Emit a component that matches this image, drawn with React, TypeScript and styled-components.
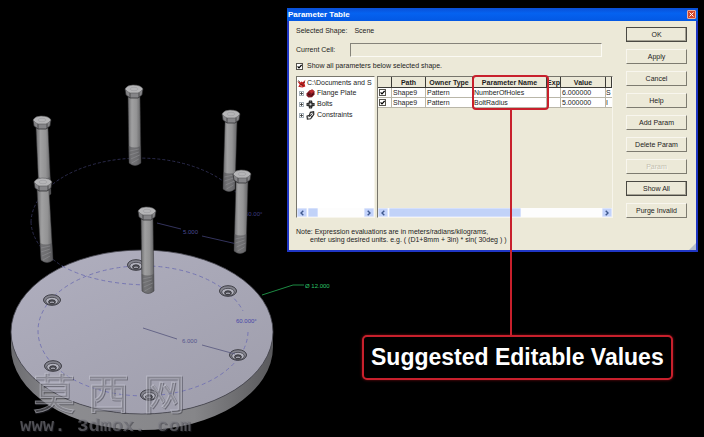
import React from "react";
import styled, { createGlobalStyle } from "styled-components";

const GlobalStyle = createGlobalStyle`
  *, *::before, *::after { box-sizing: border-box; }
  body {
    margin: 0;
    background: #000;
    font: 7px/10px "Liberation Sans", Arial, sans-serif;
    color: #1c1c1c;
  }
  button, input, h1, p, table { margin: 0; font: inherit; color: inherit; }
`;

const face = "#ece9d8";
const red = "#c8202c";

const Page = styled.main`
  position: relative;
  display: grid;
  grid-template-columns: 287px minmax(0, 1fr);
  min-height: 100vh;
  padding: 8px 6px 0 0;
  background: #000;
  overflow: hidden;
`;

const Scene = styled.svg`
  position: absolute;
  left: 0;
  top: 0;
`;

const Column = styled.div`
  grid-column: 2;
  position: relative;
`;

const Dialog = styled.section`
  border: 2px solid #1f36c4;
  border-top: 0;
  background: ${face};
`;

const TitleBar = styled.header`
  display: flex;
  align-items: center;
  justify-content: space-between;
  height: 13px;
  margin: 0 -2px;
  padding: 0 2px 0 1px;
  background: linear-gradient(#0a4fd6, #0562f0 40%, #0358e4);
`;

const Title = styled.h1`
  font-size: 8px;
  font-weight: bold;
  color: #fff;
`;

const CloseButton = styled.button`
  display: grid;
  place-items: center;
  width: 9px;
  height: 9px;
  padding: 0;
  border: 1px solid #eab0a0;
  border-radius: 1px;
  background: #d2472a;
`;

const Body = styled.div`
  position: relative;
  display: grid;
  grid-template-columns: minmax(0, 1fr) 61px;
  column-gap: 13px;
  padding: 5px 9px 6px 7px;
`;

const Shape = styled.p`
  display: flex;
  gap: 7px;
`;

const Field = styled.div`
  display: flex;
  align-items: center;
  height: 14px;
  margin-top: 7px;
`;

const FieldLabel = styled.label`
  width: 54px;
`;

const CellInput = styled.input`
  flex: 1;
  min-width: 0;
  height: 14px;
  margin-right: 11px;
  padding: 0 2px;
  border: 1px solid #fbfaf4;
  border-top-color: #85837a;
  border-left-color: #85837a;
  background: ${face};
`;

const CheckRow = styled.label`
  display: flex;
  align-items: center;
  gap: 4px;
  margin-top: 4px;
`;

const Tick = styled.input`
  appearance: none;
  display: block;
  width: 7px;
  height: 7px;
  border: 1px solid #55534c;
  background: #fff;
  &:checked {
    background: #fff url("data:image/svg+xml,%3Csvg xmlns='http://www.w3.org/2000/svg' viewBox='0 0 5 5'%3E%3Cpath d='M.6 2.3L2 3.9L4.6 1' fill='none' stroke='black' stroke-width='1.2'/%3E%3C/svg%3E") center / 5px 5px no-repeat;
  }
`;

const Panels = styled.div`
  display: grid;
  grid-template-columns: 79px minmax(0, 1fr);
  gap: 2px;
  height: 142px;
  margin-top: 5px;
`;

const Panel = styled.div<{ $white?: boolean }>`
  position: relative;
  display: flex;
  flex-direction: column;
  min-width: 0;
  border: 1px solid #f7f5ec;
  border-top-color: #77756c;
  border-left-color: #77756c;
  background: ${(p) => (p.$white ? "#fff" : face)};
`;

const PanelContent = styled.div`
  flex: 1;
  overflow: hidden;
`;

const Tree = styled.ul`
  margin: 0;
  padding: 1px 0 0;
  list-style: none;
`;

const TreeItem = styled.li<{ $child?: boolean }>`
  display: flex;
  align-items: center;
  gap: ${(p) => (p.$child ? "2px" : "1px")};
  height: 10px;
  margin-bottom: ${(p) => (p.$child ? "1px" : "0")};
  padding-left: ${(p) => (p.$child ? "2px" : "0")};
  white-space: nowrap;
  svg { flex: none; }
`;

const Expander = styled.button`
  display: grid;
  place-items: center;
  width: 5px;
  height: 5px;
  padding: 0;
  border: 1px solid #a9b4bd;
  background: #fff;
`;

const Bar = styled.div`
  display: flex;
  height: 9px;
  background: #fdfdfd;
`;

const BarButton = styled.button`
  display: grid;
  place-items: center;
  flex: none;
  width: 10px;
  padding: 0;
  border: 1px solid #dbe4fb;
  border-radius: 1px;
  background: #c3d3fb;
`;

const Thumb = styled.div<{ $width: string }>`
  width: ${(p) => p.$width};
  margin: 0 1px;
  border: 1px solid #d5e0fc;
  border-radius: 1px;
  background: #c1d2f8;
`;

const Spacer = styled.div`
  flex: 1;
`;

const Table = styled.table`
  width: 100%;
  table-layout: fixed;
  border-collapse: separate;
  border-spacing: 0;
  text-align: left;
`;

const Col = styled.col<{ $width?: string }>`
  width: ${(p) => p.$width ?? "auto"};
`;

const Th = styled.th`
  height: 11px;
  padding: 0;
  border-right: 1px solid #3b3a36;
  border-bottom: 1px solid #3b3a36;
  background: ${face};
  line-height: 9px;
  text-align: center;
  white-space: nowrap;
`;

const Td = styled.td`
  height: 10px;
  padding: 0 0 0 1px;
  border-right: 1px solid #b9b6a8;
  border-bottom: 1px solid #b9b6a8;
  background: #fff;
  line-height: 9px;
  white-space: nowrap;
  &:last-child {
    padding: 0;
    border-right: 0;
  }
`;

const Buttons = styled.div`
  display: flex;
  flex-direction: column;
  justify-content: space-between;
  padding-top: 1px;
`;

const PushButton = styled.button<{ $strong?: boolean }>`
  height: 15px;
  padding: 0;
  border: 1px solid #f8f6ee;
  border-right-color: #7d7b70;
  border-bottom-color: #7d7b70;
  background: ${face};
  ${(p) => p.$strong && "border-color: #4a4943; box-shadow: inset -1px -1px #a5a294;"}
  &:disabled {
    color: #c4c1b2;
    text-shadow: 1px 1px #fbfaf4;
  }
`;

const Note = styled.p`
  margin-top: 10px;
  line-height: 8px;
`;

const NoteLine = styled.span<{ $indent?: boolean }>`
  display: block;
  padding-left: ${(p) => (p.$indent ? "14px" : "0")};
`;

const Grip = styled.svg`
  position: absolute;
  right: 0;
  bottom: 0;
`;

const Highlight = styled.div`
  position: absolute;
  left: 94px;
  top: -2px;
  width: 77px;
  height: 35px;
  border: 2px solid ${red};
  border-radius: 4px;
  pointer-events: none;
  z-index: 2;
  &::after {
    content: "";
    position: absolute;
    left: 36px;
    top: 100%;
    width: 2px;
    height: 228px;
    background: ${red};
  }
`;

const Callout = styled.p`
  width: fit-content;
  margin: 83px 0 0 75px !important;
  padding: 8px 7px;
  border: 2px solid ${red};
  border-radius: 5px;
  background: #000;
  box-shadow: 0 0 3px #7a0c12;
  color: #fff;
  font-size: 23px;
  font-weight: bold;
  line-height: 25px;
  white-space: nowrap;
`;

const Dim = styled.text<{ $color: string }>`
  font: 6px "Liberation Sans", Arial, sans-serif;
  fill: ${(p) => p.$color};
`;

const Watermark = styled.g`
  fill: rgba(165, 165, 176, 0.35);
  stroke: rgba(205, 205, 218, 0.5);
  stroke-width: 1px;
  filter: drop-shadow(1px 1px 0 rgba(40, 40, 48, 0.7));
`;

const Hanzi = styled.text`
  font: 42px "Noto Sans CJK SC", sans-serif;
`;

const Address = styled.text`
  font: bold 19px "Liberation Mono", monospace;
  stroke-width: 0;
  fill: rgba(125, 125, 132, 0.6);
  white-space: pre;
`;

const Cross = () => (
  <svg width="5" height="5" viewBox="0 0 5 5" aria-hidden="true">
    <path d="M.5.5l4 4m0-4l-4 4" stroke="#fff" strokeWidth="1" />
  </svg>
);

const Arrow = ({ right }: { right?: boolean }) => (
  <svg width="4" height="6" viewBox="0 0 4 6" aria-hidden="true">
    <path d={right ? "M.7.7L3 3L.7 5.3" : "M3.3.7L1 3l2.3 2.3"} fill="none" stroke="#40598f" strokeWidth="1.4" />
  </svg>
);

const Plus = () => (
  <svg width="3" height="3" viewBox="0 0 3 3" aria-hidden="true">
    <path d="M0 1.5h3M1.5 0v3" stroke="#333" strokeWidth=".8" />
  </svg>
);

const SceneIcon = () => (
  <svg width="9" height="9" viewBox="0 0 9 9" aria-hidden="true">
    <path d="M.3 2.2L3.2 3.6L4.4 2.4L5.8 3.2L8.5.8L7.4 4L8.3 7.6L5.4 8.4L1.2 7.7L2.7 5.6Z" fill="#c41e1e" />
    <path d="M1 1.6L3 3M3.4 5.2l3 1.4M6.2 4l1.6-.6" stroke="#40201c" strokeWidth=".8" />
    <path d="M3.2 6.6l2 .7" stroke="#f5c6bd" strokeWidth=".7" />
  </svg>
);

const PlateIcon = () => (
  <svg width="9" height="9" viewBox="0 0 9 9" aria-hidden="true">
    <path d="M3 1.8L6.2.5L8.5 2.2V5.4L6 8.2L2.5 8.6L.5 6.8V4.4Z" fill="#7c1620" />
    <path d="M3 1.8L6.2.5L8.5 2.2L5.2 4.6Z" fill="#bd2b30" />
    <path d="M2 4.8l2.2 1.4M5.6 6.6l2-2" stroke="#26080b" strokeWidth=".9" />
  </svg>
);

const BoltsIcon = () => (
  <svg width="9" height="9" viewBox="0 0 9 9" aria-hidden="true">
    <path d="M3 .5h3l.6 2.4 2 .2v2.8l-2 .4L6 8.5H3L2.6 6.3.5 5.9V3.1l2-.4Z" fill="#292929" />
    <circle cx="4.5" cy="4.4" r="1.1" fill="#ddd" />
    <path d="M1.5 4.4h1M6.6 4.4h1M4.5 1.4v.8M4.5 6.8v.8" stroke="#aaa" strokeWidth=".7" />
  </svg>
);

const ConstraintsIcon = () => (
  <svg width="9" height="9" viewBox="0 0 9 9" aria-hidden="true">
    <path d="M3.4 4.2L4.4 1.4L7.6.8L7.8 3.4L6.2 5.6L4.6 7.8L1.4 8.2L1 5.2Z" fill="none" stroke="#2b2b2b" strokeWidth="1.2" />
    <path d="M2.6 6.2L6.4 2.4M3.4 4.2l2.8 1.4" stroke="#2b2b2b" strokeWidth="1" />
  </svg>
);

const HexBolt = ({ x, y, length, lean }: { x: number; y: number; length: number; lean: number }) => {
  const end = y + length;
  const bx = x + lean;
  const ty = end - 19;
  const tx = x + lean * 0.75;
  return (
    <g>
      <path d={`M${x - 6} ${y + 6}L${bx - 6} ${end - 2}Q${bx} ${end + 3} ${bx + 6} ${end - 2}L${x + 6} ${y + 6}Z`} fill="url(#shank)" stroke="#303032" strokeWidth=".5" />
      <path d={`M${tx - 6} ${ty}Q${tx} ${ty + 3} ${tx + 6} ${ty}L${bx + 6} ${end - 2}Q${bx} ${end + 3} ${bx - 6} ${end - 2}Z`} fill="#4f4f52" fillOpacity=".55" />
      <path d={`M${tx - 5} ${ty + 5}l9-2M${tx - 5} ${ty + 9}l9-3M${tx - 4} ${ty + 13}l9-4M${tx - 3} ${ty + 17}l7-4`} stroke="#919194" strokeWidth=".6" />
      <path d={`M${x - 9} ${y - 2}L${x - 8} ${y + 4}L${x - 4} ${y + 7}H${x + 4}L${x + 8} ${y + 4}L${x + 9} ${y - 2}Z`} fill="#858588" stroke="#262628" strokeWidth=".7" />
      <path d={`M${x - 4} ${y + 1}V${y + 7}M${x + 5} ${y + 1}V${y + 6}`} stroke="#3a3a3c" strokeWidth=".8" />
      <path d={`M${x - 9} ${y - 2}Q${x - 7} ${y - 6} ${x - 1} ${y - 6}Q${x + 7} ${y - 6} ${x + 9} ${y - 2}Q${x + 7} ${y + 1} ${x + 4} ${y + 2}H${x - 4}Q${x - 7} ${y + 1} ${x - 9} ${y - 2}Z`} fill="#b5b5b7" stroke="#59595b" strokeWidth=".6" />
      <ellipse cx={x} cy={y - 2} rx="4" ry="1.7" fill="none" stroke="#9b9b9e" strokeWidth=".6" />
    </g>
  );
};

const Hole = ({ x, y }: { x: number; y: number }) => (
  <g fill="none">
    <ellipse cx={x} cy={y} rx="8.5" ry="5.3" fill="#85858f" stroke="#303037" strokeWidth=".9" />
    <ellipse cx={x} cy={y + 1} rx="6.3" ry="3.7" fill="#b2b2bd" stroke="#3c3c44" strokeWidth=".8" />
    <ellipse cx={x} cy={y + 1.8} rx="3.4" ry="2" fill="#56565e" stroke="#26262b" strokeWidth=".8" />
    <path d={`M${x - 2} ${y + 2.8}q2-1.4 4 0`} stroke="#b9b9c3" strokeWidth=".9" />
  </g>
);

const bolts = [
  { x: 134, y: 91, length: 74, lean: 1 },
  { x: 42, y: 122, length: 74, lean: 3 },
  { x: 231, y: 116, length: 75, lean: -2 },
  { x: 43, y: 184, length: 78, lean: 4 },
  { x: 242, y: 176, length: 77, lean: -2 },
  { x: 147, y: 213, length: 80, lean: 1 },
];
const holes = [[136, 265], [52, 300], [53, 366], [149, 395], [238, 355], [228, 291]];

const ModelView = () => (
  <Scene width="340" height="437" viewBox="0 0 340 437" role="img" aria-label="Flange plate with six bolts">
    <defs>
      <linearGradient id="shank">
        <stop offset="0" stopColor="#6c6c6e" />
        <stop offset=".3" stopColor="#a0a0a1" />
        <stop offset=".65" stopColor="#939394" />
        <stop offset="1" stopColor="#646466" />
      </linearGradient>
      <linearGradient id="rim">
        <stop offset="0" stopColor="#6c6c70" />
        <stop offset=".2" stopColor="#8c8c90" />
        <stop offset=".7" stopColor="#868689" />
        <stop offset="1" stopColor="#59595c" />
      </linearGradient>
      <linearGradient id="plate" x1="0" y1="0" x2=".7" y2="1">
        <stop offset="0" stopColor="#b0afbf" />
        <stop offset="1" stopColor="#a09fad" />
      </linearGradient>
    </defs>
    <path d="M31 222A109 65 0 0 1 246 208" fill="none" stroke="#2b2b4c" strokeWidth="1" strokeDasharray="3 2" />
    <path d="M31 222Q32 246 62 266" fill="none" stroke="#2b2b4c" strokeWidth="1" strokeDasharray="3 2" />
    <path d="M157 223L181 229M202 236L237 244" stroke="#33335c" strokeWidth="1" />
    <Dim x="183" y="234" $color="#4a4a92">5.000</Dim>
    <Dim x="245" y="216" $color="#3c3c80">60.00°</Dim>
    <path d="M11 332A131 82 0 0 0 273 332V347A131 83 0 0 1 11 347Z" fill="url(#rim)" />
    <ellipse cx="142" cy="332" rx="131" ry="82" fill="url(#plate)" stroke="#44444c" strokeWidth=".8" />
    <path d="M248 332A105 65 0 1 1 243 311" fill="none" stroke="#7777b2" strokeWidth="1" strokeDasharray="4 3" />
    <path d="M62 266Q95 284 147 285" fill="none" stroke="#7777b2" strokeWidth="1" strokeDasharray="4 3" />
    {holes.map(([x, y]) => <Hole key={x} x={x} y={y} />)}
    <path d="M143 328L177 339M202 345L235 354" stroke="#55557c" strokeWidth=".8" />
    <Dim x="182" y="343" $color="#54548c">6.000</Dim>
    <Dim x="236" y="323" $color="#4646a8">60.000°</Dim>
    {bolts.map((b) => <HexBolt key={`${b.x}-${b.y}`} {...b} />)}
    <path d="M262 295L293 285H304" fill="none" stroke="#1d8a43" strokeWidth="1" />
    <Dim x="305" y="288" $color="#2cc468">Ø 12.000</Dim>
    <Watermark>
      <Hanzi x="33" y="409">莫</Hanzi>
      <Hanzi x="87" y="409">西</Hanzi>
      <Hanzi x="143" y="409">网</Hanzi>
      <Address x="20" y="431">www. 3dmox. com</Address>
    </Watermark>
  </Scene>
);

const ScrollBar = ({ thumb }: { thumb: string }) => (
  <Bar>
    <BarButton aria-label="Scroll left"><Arrow /></BarButton>
    <Thumb $width={thumb} />
    <Spacer />
    <BarButton aria-label="Scroll right"><Arrow right /></BarButton>
  </Bar>
);

const nodes = [
  { name: "Flange Plate", Icon: PlateIcon },
  { name: "Bolts", Icon: BoltsIcon },
  { name: "Constraints", Icon: ConstraintsIcon },
];

const rows = [
  { path: "Shape9", owner: "Pattern", name: "NumberOfHoles", value: "6.000000", rest: "S" },
  { path: "Shape9", owner: "Pattern", name: "BoltRadius", value: "5.000000", rest: "I" },
];

const actions = ["OK", "Apply", "Cancel", "Help", "Add Param", "Delete Param", "Param", "Show All", "Purge Invalid"];

export default function App() {
  return (
    <Page>
      <GlobalStyle />
      <ModelView />
      <Column>
        <Dialog role="dialog" aria-labelledby="dialog-title">
          <TitleBar>
            <Title id="dialog-title">Parameter Table</Title>
            <CloseButton aria-label="Close"><Cross /></CloseButton>
          </TitleBar>
          <Body>
            <div>
              <Shape><span>Selected Shape:</span><span>Scene</span></Shape>
              <Field>
                <FieldLabel htmlFor="current-cell">Current Cell:</FieldLabel>
                <CellInput id="current-cell" type="text" />
              </Field>
              <CheckRow>
                <Tick type="checkbox" defaultChecked />
                Show all parameters below selected shape.
              </CheckRow>
              <Panels>
                <Panel $white>
                  <PanelContent>
                    <Tree>
                      <TreeItem><SceneIcon />C:\Documents and S</TreeItem>
                      {nodes.map(({ name, Icon }) => (
                        <TreeItem key={name} $child>
                          <Expander aria-label={`Expand ${name}`}><Plus /></Expander>
                          <Icon />
                          {name}
                        </TreeItem>
                      ))}
                    </Tree>
                  </PanelContent>
                  <ScrollBar thumb="10px" />
                </Panel>
                <Panel>
                  <PanelContent>
                    <Table>
                      <colgroup>
                        <Col $width="14px" />
                        <Col $width="34px" />
                        <Col $width="47px" />
                        <Col $width="74px" />
                        <Col $width="14px" />
                        <Col $width="45px" />
                        <Col />
                      </colgroup>
                      <thead>
                        <tr>
                          <Th />
                          <Th>Path</Th>
                          <Th>Owner Type</Th>
                          <Th>Parameter Name</Th>
                          <Th>Exp</Th>
                          <Th>Value</Th>
                          <Th />
                        </tr>
                      </thead>
                      <tbody>
                        {rows.map((r) => (
                          <tr key={r.name}>
                            <Td><Tick type="checkbox" defaultChecked aria-label={r.name} /></Td>
                            <Td>{r.path}</Td>
                            <Td>{r.owner}</Td>
                            <Td>{r.name}</Td>
                            <Td />
                            <Td>{r.value}</Td>
                            <Td>{r.rest}</Td>
                          </tr>
                        ))}
                      </tbody>
                    </Table>
                  </PanelContent>
                  <ScrollBar thumb="132px" />
                  <Highlight />
                </Panel>
              </Panels>
            </div>
            <Buttons>
              {actions.map((a) => (
                <PushButton key={a} $strong={a === "OK" || a === "Show All"} disabled={a === "Param"}>{a}</PushButton>
              ))}
            </Buttons>
            <Note>
              <NoteLine>Note: Expression evaluations are in meters/radians/kilograms,</NoteLine>
              <NoteLine $indent>enter using desired units. e.g. ( (D1+8mm + 3in) * sin( 30deg ) )</NoteLine>
            </Note>
            <Grip width="7" height="7" viewBox="0 0 7 7" aria-hidden="true">
              <path d="M0 7L7 0V7Z" fill="#b4bccb" />
            </Grip>
          </Body>
        </Dialog>
        <Callout>Suggested Editable Values</Callout>
      </Column>
    </Page>
  );
}
